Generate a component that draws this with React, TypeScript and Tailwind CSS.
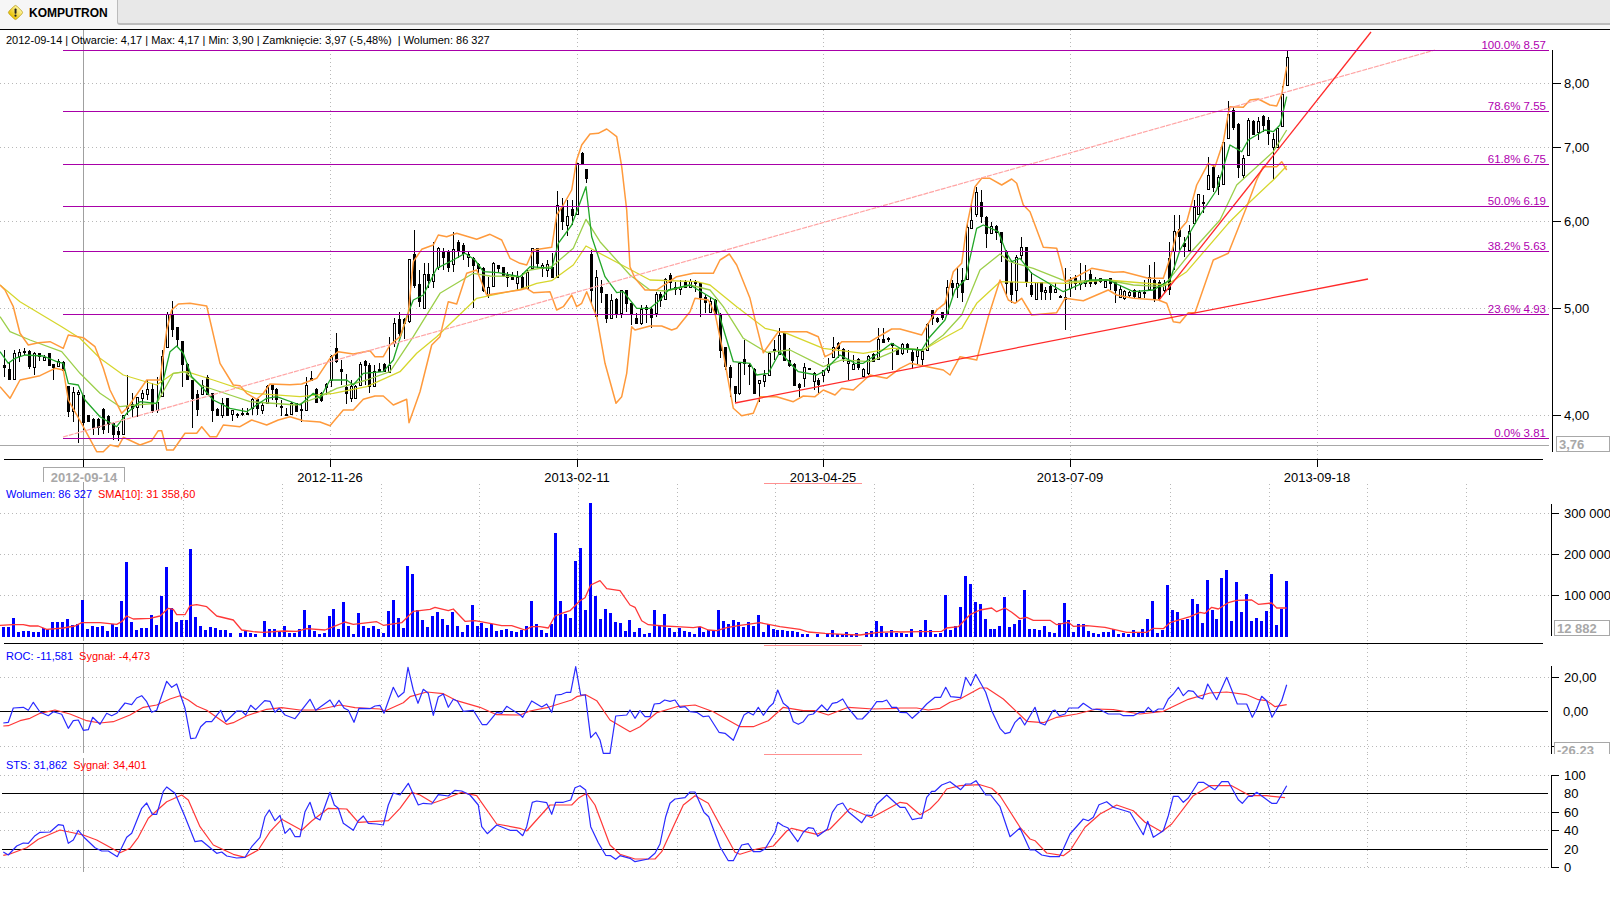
import React from "react";

const Z = (ox: number, oy: number, s: string): string =>
  s.split(" ").map((p) => {
    const [x, y] = p.split(",").map(Number);
    return `${(ox + x / 3).toFixed(1)},${(oy + y / 3).toFixed(1)}`;
  }).join(" ");

const upper = [
  Z(0, 230, "0,165 15,180 40,230 60,310 85,345 115,338 150,335 190,355 205,315 250,323 285,350 310,415 330,480 365,550 385,530 440,450 480,450 500,300 515,240 535,222 570,220 620,228 660,400 700,465 720,467 740,490 770,508 790,490 810,462 870,464 905,462 950,445 990,385 1015,365 1060,372 1110,362 1125,380 1150,380 1170,345 1200,320 1225,250 1240,95 1265,58 1300,45 1315,15 1340,20 1370,10 1430,28 1470,13 1505,30 1530,85 1560,100"),
  Z(520, 110, "20,465 40,420 95,412 110,315 130,285 155,240 170,150 185,105 210,72 235,70 260,57 290,80 305,170 320,300 330,470 345,505 375,540 410,540 470,500 520,490 580,490 600,450 628,432 650,465 690,565 710,650 730,728 775,665 860,665 895,680 915,740 935,730 965,695 1050,695 1115,657"),
  Z(900, 90, "0,717 30,725 65,735 85,700 110,660 135,640 160,545 185,520 200,410 225,290 245,265 270,265 305,285 335,267 350,280 370,345 390,365 430,472 470,475 485,530 495,575 530,560 575,535 640,547 670,545 745,565 790,565 810,505 830,430 860,395 890,285 925,220 945,230 970,155 985,70"),
  Z(1200, 0, "90,320 130,322 150,300 175,297 210,315 230,318 245,283 260,200"),
].join(" ");

const lower = [
  Z(0, 230, "0,470 30,505 60,450 120,437 165,415 190,420 205,510 250,590 290,665 310,665 330,645 355,650 370,622 420,645 455,632 475,602 485,602 500,660 520,660 555,610 590,610 605,590 630,620 650,620 670,585 720,590 755,570 800,585 835,570 870,560 910,572 960,576 990,587 1030,540 1060,540 1090,508 1125,498 1150,498 1180,525 1220,508 1227,578 1260,485 1295,345 1320,320 1345,215 1370,222 1400,130 1430,120 1460,195 1560,180"),
  Z(520, 110, "20,535 40,548 90,545 110,600 130,590 155,555 170,590 185,580 200,545 230,620 255,760 288,880 305,860 320,790 335,650 345,660 390,648 425,648 455,660 470,655 510,605 525,565 565,570 585,610 610,730 640,895 665,917 700,910 720,860 770,860 820,875 850,858 885,860 910,840 945,855 965,835 1000,840 1050,795 1100,805"),
  Z(900, 90, "0,835 30,820 130,840 150,855 180,800 230,810 265,680 300,570 325,630 345,640 365,625 395,675 470,668 495,625 550,632 625,600 650,615 700,625 775,630 800,640 820,695 840,698 865,668 885,668 940,510 985,490 1040,350 1070,270 1090,230 1130,230 1145,215 1160,240"),
].join(" ");

const green = [
  Z(0, 230, "0,365 25,400 45,385 75,375 130,378 170,395 190,400 205,460 235,465 255,510 300,560 350,590 380,550 420,515 470,520 490,450 510,365 530,348 550,370 575,440 600,465 640,510 690,535 740,545 800,505 830,500 900,525 940,490 960,505 990,450 1040,450 1060,465 1090,430 1150,425 1180,390 1220,260 1240,210 1270,195 1310,115 1360,90 1395,70 1425,90 1450,125 1495,128 1560,140"),
  Z(520, 110, "30,470 95,475 115,400 155,345 198,230 215,380 255,500 290,548 310,545 350,595 390,595 420,570 445,540 510,525 585,570 605,640 640,755 690,760 710,795 745,790 780,725 815,765 835,785 890,795 910,785 960,735 1005,760 1030,760 1075,730 1115,700"),
  Z(900, 90, "0,775 65,780 90,740 135,690 165,600 195,570 230,415 250,405 295,425 320,490 335,515 360,505 395,550 490,605 570,570 625,570 700,605 760,600 810,570 840,480 900,375 950,300 990,165 1025,185 1045,150 1095,120 1120,125 1140,105 1160,20"),
].join(" ");

const lightGreen = [
  Z(0, 230, "0,260 30,305 90,330 185,365 240,430 300,490 360,530 405,525 470,520 520,430 555,425 600,465 690,495 750,515 890,525 960,500 1010,475 1100,450 1170,425 1240,320 1320,190 1420,130 1470,138 1560,140"),
  Z(520, 110, "30,480 95,470 160,415 198,328 240,395 330,495 390,540 440,543 510,525 570,540 610,590 670,685 740,727 810,720 910,770 965,750 1050,755 1120,725"),
  Z(900, 90, "0,775 70,780 130,735 185,675 240,540 300,492 330,515 400,535 500,575 620,570 700,585 790,590 870,490 960,390 1010,285 1120,185 1160,120"),
].join(" ");

const yellow = [
  Z(0, 230, "0,165 60,215 185,290 240,325 300,385 370,435 470,465 520,430 560,425 640,450 760,490 900,500 1000,490 1100,470 1200,425 1250,370 1310,320 1430,205 1560,178"),
  Z(520, 110, "50,520 95,512 160,465 198,408 300,462 390,510 530,515 570,525 650,590 735,655 800,670 910,715 1030,730 1115,715"),
  Z(900, 90, "0,775 70,780 130,745 185,715 230,640 300,575 500,580 620,570 800,585 860,545 985,400 1040,345 1120,270 1160,228"),
].join(" ");

type C = { x: number; a: number; b: number; c: number; d: number; f: boolean };
const parseC = (ox: number, oy: number, s: string): C[] =>
  s.trim().split(/\s+/).map((p) => {
    const [x, a, b, c, d, f] = p.split(",").map(Number);
    return { x: ox + x / 3, a: oy + a / 3, b: oy + b / 3, c: oy + c / 3, d: oy + d / 3, f: f === 1 };
  });

const candles: C[] = [
  ...parseC(0, 230, `12,360,405,412,440,1 28,400,418,447,450,1 42,360,370,447,450,0 58,358,365,378,395,0 73,355,363,367,375,1 88,360,362,408,418,1 103,365,370,412,435,0 118,368,370,378,392,1 132,375,380,389,392,0 146,368,370,405,405,1 160,402,403,410,450,1 175,388,392,407,410,0 190,392,395,420,420,1 205,468,468,542,560,1 220,470,487,542,575,0 235,480,487,492,638,0 250,495,495,575,600,1 265,555,555,572,575,1 280,565,568,592,615,1 295,565,568,592,615,1 310,535,537,597,612,1 325,555,558,582,610,1 340,575,580,612,630,1 355,590,603,612,632,1 368,555,556,612,612,0 382,435,528,533,555,0 397,490,522,533,560,1 412,500,502,530,560,0 427,480,490,505,535,0 442,450,478,492,510,0 457,460,477,540,550,1 472,440,515,540,550,0 487,360,378,497,500,0 502,245,253,352,352,0 517,213,253,296,322,1 532,290,292,327,350,1 547,333,333,402,472,1 562,400,402,447,450,1 577,450,450,505,593,1 592,480,492,538,558,1 605,450,466,492,495,0 620,436,440,492,492,1 635,490,490,540,575,1 650,535,538,555,558,1 665,505,518,555,565,0 680,505,505,555,555,1 695,540,541,553,572,0 710,550,552,556,565,1 725,535,548,553,558,1 740,535,548,553,555,1 755,505,507,535,555,0 770,505,507,535,555,1 785,520,525,540,552,0 800,465,468,520,520,0 815,463,465,478,510,1 827,475,476,507,530,1 842,510,528,530,558,1 857,535,552,555,558,1 872,515,518,552,555,0 887,518,520,542,545,1 902,520,538,541,575,1 917,440,465,540,540,0 932,423,445,451,452,1 947,475,477,517,520,1 962,485,490,510,515,1 977,460,461,472,495,0 992,375,378,450,470,0 1007,310,355,392,400,1 1022,390,418,424,465,1 1037,432,470,490,522,1 1052,450,467,504,515,0 1064,465,468,503,505,0 1079,395,403,465,465,0 1094,390,392,405,465,1 1108,400,405,468,490,1 1123,405,422,468,468,0 1138,400,418,424,425,1 1153,400,402,422,425,1 1168,320,405,425,425,0 1183,265,278,340,350,0 1198,245,268,310,320,1 1213,265,268,280,328,1 1228,88,88,272,280,0 1243,0,72,165,175,1 1258,120,162,212,230,1 1273,100,133,233,232,0 1285,100,133,150,175,1 1300,35,133,152,175,0 1315,50,55,112,120,0 1330,55,63,80,120,1 1345,60,62,112,125,1 1360,5,58,102,125,0 1375,30,35,60,85,1 1390,40,45,70,90,1 1405,65,72,80,110,0 1420,80,85,105,235,1 1435,100,102,115,130,1 1450,110,115,180,185,1 1465,140,172,195,205,0 1480,95,98,168,168,0 1495,105,105,113,130,1 1510,110,112,135,140,1 1522,125,135,142,170,0 1537,125,135,148,150,1 1552,122,140,160,180,0`),
  ...parseC(520, 110, `7,490,500,533,535,1 22,480,485,533,535,0 37,415,415,473,475,0 52,415,415,460,475,1 67,458,465,475,500,0 82,450,462,480,500,0 97,430,470,500,500,1 112,243,285,500,500,0 127,265,292,332,360,1 142,270,318,345,378,0 157,270,298,315,345,1 172,160,160,313,315,0 187,125,130,160,165,1 199,178,178,205,218,1 214,420,433,540,580,1 229,480,502,618,618,0 244,510,530,545,578,1 259,552,553,625,638,1 274,552,570,625,625,0 289,565,568,612,625,1 304,540,541,610,625,0 319,540,541,578,605,1 334,578,578,612,645,1 349,610,625,638,640,1 364,585,598,638,645,0 379,585,592,598,640,0 394,590,598,620,655,1 409,545,553,610,620,0 421,545,552,570,590,1 436,505,508,568,570,0 451,490,495,515,540,1 466,515,530,538,555,0 481,510,530,538,555,0 496,510,516,530,535,1 511,508,512,530,535,0 526,510,514,520,545,1 541,518,520,560,620,1 556,555,560,575,610,1 571,560,572,605,605,0 586,568,570,612,612,1 601,610,612,720,745,1 616,710,712,767,780,1 631,765,770,800,860,1 646,828,828,850,875,1 658,755,758,848,855,0 673,690,748,760,795,1 688,760,765,768,825,1 703,775,778,850,850,1 718,810,811,820,875,0 733,780,795,812,830,0 748,725,730,795,795,0 763,690,718,722,750,1 778,655,676,733,735,0 793,670,670,750,750,1 808,715,750,765,770,1 823,760,762,825,825,1 838,820,822,832,860,1 853,760,772,805,830,0 868,775,775,777,780,1 881,785,790,812,840,0 895,805,810,822,848,1 910,780,781,795,815,0 925,745,762,780,790,0 940,680,710,742,745,0 955,695,700,715,745,1 970,715,716,745,755,1 985,720,752,760,810,0 1000,735,762,778,780,0 1015,745,747,772,780,1 1030,775,778,798,800,0 1045,735,738,790,795,0 1060,730,732,752,755,1 1075,655,688,748,750,0 1090,655,687,695,700,1 1105,680,685,688,695,1 1117,700,700,705,780,1 1132,715,715,733,735,1 1147,700,701,730,735,0 1162,700,702,715,730,1 1177,720,727,750,778,1 1192,710,720,737,765,0`),
  ...parseC(900, 90, `67,780,782,808,825,0 82,700,702,780,780,0 97,660,660,685,705,1 112,680,685,693,700,1 127,665,666,680,690,1 142,570,590,670,670,0 157,570,578,590,625,1 172,530,580,590,625,0 187,535,570,605,635,1 202,400,410,568,570,0 214,345,390,413,415,0 229,290,305,372,380,0 244,300,335,377,400,1 259,378,380,430,475,1 274,395,407,428,430,0 289,405,407,425,450,1 304,425,425,455,515,1 319,480,482,578,620,1 334,520,575,612,640,1 349,495,500,600,635,0 364,440,472,495,510,0 379,470,472,572,590,1 394,545,585,612,620,1 409,575,577,628,630,0 424,575,577,602,630,1 436,590,600,606,630,0 451,585,588,605,630,1 466,580,597,606,610,0 481,615,617,618,620,1 496,535,622,628,720,0 511,560,570,595,622,0 526,555,565,580,600,1 541,520,575,582,600,0 556,525,570,580,590,0 571,540,552,578,590,1 586,560,572,580,585,1 601,565,563,572,580,0 616,570,572,590,595,0 631,565,565,580,600,1 646,570,577,600,640,1 661,585,598,620,625,0 673,600,602,625,630,0 688,602,606,615,625,0 703,598,600,618,625,1 718,600,605,622,625,0 733,570,606,610,625,1 748,525,562,598,600,0 763,517,570,628,635,1 778,570,575,625,630,1 793,570,580,600,610,0 808,455,505,598,615,1 823,375,423,482,540,0 838,375,418,438,480,1 853,440,460,467,500,1 868,405,424,480,480,0 883,330,350,400,400,0 895,312,313,372,375,0 910,315,335,340,370,1 925,200,255,298,300,0 940,225,230,290,305,1 955,255,260,288,315,0 970,150,155,283,285,0 985,32,72,143,145,0 1000,50,60,110,120,1 1015,100,103,230,265,1 1030,195,205,255,265,0 1045,85,90,195,195,0 1060,90,92,132,135,1 1075,80,92,125,150,0 1090,75,77,105,125,1 1105,80,90,130,165,1 1120,130,148,170,270,0 1132,110,113,170,170,0`),
  ...parseC(1200, 0, `247,258,282,378,380,0 262,152,170,255,258,0`),
];

const volume = [
  ...`10,470 25,470 40,444 55,485 70,483 85,483 100,485 115,485 130,473 143,476 158,456 173,456 187,456 202,447 217,465 232,462 246,390 262,477 278,468 292,470 307,468 322,483 337,462 350,470 365,393 380,276 395,456 410,480 424,474 439,474 454,435 469,465 484,378 499,291 514,414 529,456 544,450 559,450 572,237 587,441 602,468 617,480 632,471 647,474 662,480 676,480 691,489 721,489 736,483 751,489 766,492 793,453 808,477 823,477 838,486 853,468 868,489 883,489 898,477 913,420 928,465 943,483 958,492 973,489 988,438 1001,417 1016,477 1031,396 1046,468 1061,492 1076,429 1091,468 1106,474 1121,468 1136,477 1151,489 1166,423 1180,390 1195,444 1210,474 1222,288 1237,312 1252,420 1267,450 1282,471 1297,438 1312,426 1327,447 1342,465 1357,426 1372,468 1387,486 1402,465 1417,405 1432,468 1444,459 1459,474 1474,462 1489,483 1504,480 1519,477 1534,483 1549,486`.split(" ").map((p) => { const [x, y] = p.split(",").map(Number); return { x: x / 3, y: 470 + y / 3 }; }),
  ...`5,480 19,468 34,393 49,462 64,480 79,489 94,462 107,189 122,393 137,432 152,444 166,273 181,234 196,420 212,99 226,378 241,447 256,417 271,429 286,456 301,459 316,483 329,450 344,486 359,474 374,492 389,489 404,420 419,465 434,432 449,474 464,486 478,474 493,483 508,486 523,492 538,471 551,486 566,480 581,483 596,420 611,453 626,462 641,450 656,456 671,471 686,456 701,468 716,435 731,486 746,462 761,477 772,480 787,480 802,483 817,483 832,486 847,492 862,492 892,492 922,492 937,480 952,492 967,492 980,486 995,492 1010,489 1040,486 1055,483 1070,453 1085,468 1100,489 1115,480 1130,489`.split(" ").map((p) => { const [x, y] = p.split(",").map(Number); return { x: 520 + x / 3, y: 470 + y / 3 }; }),
  ...`4,447 19,450 34,435 61,438 76,408 91,438 106,450 121,447 136,333 151,438 166,426 181,369 196,276 211,300 226,354 241,360 256,405 271,435 283,435 298,426 313,339 328,429 343,420 358,408 373,318 388,435 403,435 418,438 433,426 448,444 463,447 478,417 493,357 505,408 520,444 535,420 550,420 565,441 580,447 595,450 610,444 625,444 640,435 655,450 670,447 685,450 700,438 715,447 727,435 742,405 757,351 772,447 787,438 802,303 817,378 832,384 847,408 862,405 877,345 892,360 907,417 922,288 937,378 949,405 964,282 979,258 994,411 1009,294 1024,384 1039,330 1054,411 1069,402 1084,411 1099,381 1114,270 1129,423 1144,375 1159,291`.split(" ").map((p) => { const [x, y] = p.split(",").map(Number); return { x: 900 + x / 3, y: 484 + y / 3 }; }),
];

const sma = [
  Z(0, 470, "0,466 40,464 70,464 90,468 115,468 140,478 190,474 225,468 245,458 300,458 350,463 365,455 380,438 400,447 450,445 480,438 505,415 520,418 530,434 555,434 570,407 590,404 620,410 650,438 700,450 725,480 760,485 790,487 850,483 890,484 920,476 975,480 1010,466 1035,456 1060,463 1130,455 1150,466 1205,458 1240,424 1290,418 1305,412 1345,422 1360,417 1395,454 1425,452 1470,460 1505,467 1535,467 1560,475"),
  Z(520, 470, "15,480 35,470 60,470 85,474 105,438 125,430 150,422 180,392 195,383 212,345 240,332 260,356 300,362 330,405 345,412 365,452 385,464 430,468 470,470 520,473 540,470 565,480 590,482 620,473 660,466 720,458 780,470 840,478 865,486 915,490 970,493 1020,495 1075,487 1130,485"),
  Z(900, 484, "0,444 60,443 125,442 140,432 175,428 210,392 240,378 275,372 290,383 315,372 335,385 360,404 380,400 400,409 450,409 470,422 505,415 520,427 560,425 615,430 680,445 740,445 760,433 790,434 810,416 870,398 900,385 915,388 935,370 955,375 985,356 1010,349 1055,348 1075,361 1115,357 1130,372 1160,372"),
].join(" ");

const rocBlue = [
  Z(0, 630, "10,279 25,277 40,234 70,232 85,241 100,217 120,246 145,257 160,245 185,253 205,295 220,272 235,270 250,301 265,299 278,262 300,283 320,250 335,257 350,250 375,219 395,224 410,204 425,197 440,215 455,247 470,241 500,154 515,172 530,162 555,235 572,326 587,324 602,290 618,275 635,275 662,241 677,275 710,243 725,243 737,255 752,226 767,239 794,212 810,214 825,247 838,235 855,255 885,266 930,208 947,241 990,210 1003,231 1017,211 1033,235 1045,241 1062,277 1077,235 1110,236 1125,228 1140,226 1152,250 1180,172 1195,201 1212,187 1224,112 1240,180 1254,220 1270,178 1285,190 1300,256 1315,201 1330,192 1345,232 1360,208 1372,213 1390,244 1420,241 1447,284 1460,284 1490,247 1505,250 1520,229 1560,254"),
  Z(520, 470, "8,742 35,693 65,711 80,702 95,727 107,675 125,673 140,667 152,667 167,590 182,675 196,675 212,803 227,787 240,810 250,850 270,850 287,738 320,735 330,720 345,745 360,722 375,740 390,740 403,702 420,700 434,690 450,694 465,690 480,712 495,710 510,725 530,727 550,740 566,738 597,787 615,790 640,811 672,735 685,727 700,735 715,712 730,736 747,712 760,700 773,660 790,700 805,712 820,755 835,763 850,755 865,735 880,732 905,705 922,722 937,700 952,697 968,687 983,712 1012,747 1027,747 1050,723 1070,695 1087,695 1100,690 1115,712 1130,712"),
  Z(900, 484, "0,685 20,686 37,703 60,682 80,660 105,640 122,640 137,610 152,638 182,641 197,580 212,605 227,571 257,625 275,680 300,733 315,749 330,745 345,715 360,700 374,723 405,670 420,717 435,723 458,680 465,678 478,695 495,690 507,672 535,672 550,658 575,675 600,677 625,690 660,690 670,695 700,695 720,685 733,685 745,670 760,685 775,675 790,675 805,645 820,630 835,610 850,635 865,620 880,622 895,640 908,645 923,600 950,647 980,580 1012,660 1040,660 1057,700 1070,675 1085,637 1100,650 1116,700 1145,650 1160,602"),
].join(" ");

const rocRed = [
  Z(0, 630, "10,288 25,287 60,272 90,265 120,250 165,240 210,252 260,272 300,279 340,275 390,255 430,232 470,225 510,207 540,197 565,210 590,228 620,241 680,283 700,278 740,257 800,238 845,233 900,240 950,240 1020,225 1065,233 1140,237 1155,243 1210,218 1230,200 1280,186 1330,191 1370,212 1440,232 1490,254 1560,255"),
  Z(520, 470, "30,723 80,713 155,690 170,680 197,674 230,692 270,750 330,785 360,770 410,728 470,710 525,705 580,725 660,770 700,770 745,752 790,712 850,722 885,722 925,735 985,712 1060,717 1130,715"),
  Z(900, 484, "0,672 50,672 85,678 120,673 150,655 180,645 240,612 260,612 310,645 380,712 430,716 470,700 530,690 590,675 640,677 720,690 790,682 865,646 930,627 980,624 1040,632 1075,647 1100,650 1125,668 1160,662"),
].join(" ");

const stsBlue = [
  Z(0, 630, "10,666 25,675 50,648 70,639 85,640 105,617 120,607 150,606 175,584 190,586 205,640 220,630 235,601 255,625 285,653 305,663 325,663 352,680 380,622 395,610 425,535 440,519 457,553 470,553 490,484 500,471 525,490 555,560 585,635 605,632 650,670 665,666 680,678 710,684 735,682 755,650 780,622 795,560 808,540 825,572 840,556 855,610 870,595 885,620 900,620 915,545 930,517 945,562 960,570 990,487 1003,525 1015,535 1030,580 1060,601 1075,572 1090,558 1105,580 1130,582 1150,585 1165,525 1180,489 1200,495 1225,460 1255,525 1270,520 1295,522 1315,494 1345,498 1365,481 1385,483 1410,495 1435,525 1445,590 1462,611 1490,585 1530,601 1550,601 1560,610"),
  Z(520, 745, "8,272 20,245 37,172 50,168 80,173 95,208 107,172 130,172 152,165 165,128 180,122 197,135 212,245 235,293 257,331 272,332 287,343 300,332 330,340 345,350 385,342 405,325 420,297 437,215 450,175 465,162 495,158 510,141 525,141 552,202 566,215 600,305 625,347 640,347 665,300 685,296 700,320 720,320 735,312 765,262 773,232 790,243 803,248 833,290 850,262 865,248 880,250 893,274 922,252 937,202 952,180 968,174 985,200 1025,233 1040,210 1055,212 1070,178 1100,150"),
  Z(900, 484, "0,970 15,970 37,1007 60,1002 65,1003 80,940 95,922 105,922 125,903 150,893 182,917 197,900 212,900 228,890 257,933 272,933 300,968 330,1058 360,1032 390,1098 405,1098 425,1113 450,1118 478,1118 490,1095 510,1050 550,1005 565,1010 580,1000 597,962 620,953 640,970 690,985 730,1052 743,1012 760,1060 790,1040 805,995 820,937 835,937 850,955 865,942 895,895 910,895 945,917 965,893 985,893 1015,947 1027,958 1045,937 1057,937 1070,925 1115,958 1130,958 1160,905"),
].join(" ");

const stsRed = [
  Z(0, 630, "10,676 30,672 80,653 115,628 180,600 250,615 290,630 360,668 390,655 415,622 445,565 500,515 545,495 565,510 600,590 640,645 700,673 735,682 775,660 810,605 845,568 905,601 935,573 985,535 1040,537 1075,577 1165,572 1200,535 1235,487 1260,495 1300,519 1340,505 1385,487 1430,497 1490,582 1560,595"),
  Z(520, 745, "20,258 90,180 155,180 175,160 200,145 225,180 270,300 300,328 345,342 405,342 425,320 490,180 525,152 565,175 600,240 645,322 660,328 710,312 760,303 800,258 815,250 890,268 930,252 990,190 1055,218"),
  Z(900, 484, "0,955 20,958 60,992 90,975 115,950 140,915 180,905 240,902 275,913 300,935 360,1030 390,1065 405,1070 440,1107 490,1115 510,1100 555,1030 600,990 650,963 700,980 735,1015 785,1043 815,1020 880,935 930,905 995,905 1050,935 1100,935 1155,941"),
].join(" ");

const FIB = [
  { y: 50, t: "100.0% 8.57", ly: 45 },
  { y: 111, t: "78.6% 7.55", ly: 106 },
  { y: 164, t: "61.8% 6.75", ly: 159 },
  { y: 206, t: "50.0% 6.19", ly: 201 },
  { y: 251, t: "38.2% 5.63", ly: 246 },
  { y: 314, t: "23.6% 4.93", ly: 309 },
  { y: 438, t: "0.0% 3.81", ly: 433 },
];
const PRICE_TICKS = [
  { y: 83, t: "8,00" },
  { y: 147, t: "7,00" },
  { y: 221, t: "6,00" },
  { y: 308, t: "5,00" },
  { y: 415, t: "4,00" },
];
const DATES = [
  { x: 330, t: "2012-11-26" },
  { x: 577, t: "2013-02-11" },
  { x: 823, t: "2013-04-25" },
  { x: 1070, t: "2013-07-09" },
  { x: 1317, t: "2013-09-18" },
];
const SUBGRID = Array.from({ length: 14 }, (_, i) => Math.round(183.3 + 98.67 * i));

const dot = "#b8b8b8";
const HDots = ({ ys }: { ys: number[] }) => (
  <>
    {ys.map((y) => (
      <line key={y} x1={0} x2={1551} y1={y + 0.5} y2={y + 0.5} stroke={dot} strokeDasharray="1 3" />
    ))}
  </>
);
const VDots = ({ xs, y1, y2 }: { xs: number[]; y1: number; y2: number }) => (
  <>
    {xs.map((x) => (
      <line key={x} x1={x + 0.5} x2={x + 0.5} y1={y1} y2={y2} stroke={dot} strokeDasharray="1 3" />
    ))}
  </>
);
const Line = ({ pts, color, w = 1.2 }: { pts: string; color: string; w?: number }) => (
  <polyline points={pts} fill="none" stroke={color} strokeWidth={w} strokeLinejoin="round" />
);
const H = ({ y, x1, x2, color = "#000" }: { y: number; x1: number; x2: number; color?: string }) => (
  <line x1={x1} x2={x2} y1={y + 0.5} y2={y + 0.5} stroke={color} shapeRendering="crispEdges" />
);
const V = ({ x, y1, y2, color = "#000" }: { x: number; y1: number; y2: number; color?: string }) => (
  <line x1={x + 0.5} x2={x + 0.5} y1={y1} y2={y2} stroke={color} shapeRendering="crispEdges" />
);
const AxisLabel = ({ x, y, t }: { x: number; y: number; t: string }) => (
  <text x={x} y={y + 4.5} fontSize={13} fill="#000">{t}</text>
);
const ValueBox = ({ x, y, h, t }: { x: number; y: number; h: number; t: string }) => (
  <g>
    <rect x={x + 0.5} y={y + 0.5} width={1609 - x} height={h} fill="#fff" stroke="#a8a8a8" shapeRendering="crispEdges" />
    <text x={x + 3} y={y + 13} fontSize={13} fontWeight={700} fill="#a8a8a8">{t}</text>
  </g>
);

function PricePanel() {
  return (
    <div className="relative h-[452px]">
      <div className="absolute left-[6px] top-[3px] text-[11px] leading-[14px] text-black whitespace-pre">
        {"2012-09-14 | Otwarcie: 4,17 | Max: 4,17 | Min: 3,90 | Zamknięcie: 3,97 (-5,48%)  | Wolumen: 86 327"}
      </div>
      <svg viewBox="0 30 1610 452" className="block w-[1610px] h-[452px]" style={{ fontFamily: "'Liberation Sans', Arial, sans-serif" }}>
        <HDots ys={PRICE_TICKS.map((t) => t.y)} />
        <VDots xs={DATES.map((d) => d.x)} y1={30} y2={459} />
        <V x={83} y1={30} y2={459} color="#a0a0a0" />
        <H y={445} x1={0} x2={1549} color="#a8a8a8" />
        <g shapeRendering="crispEdges">
          {candles.map((c, i) => {
            const r = Math.round(c.x) - 1;
            const t = Math.round(c.b);
            const h = Math.max(1, Math.round(c.c) - t);
            return (
              <g key={i}>
                <rect x={r + 1} y={c.a} width={1} height={Math.max(1, c.d - c.a)} fill="#000" />
                <rect x={r + 0.5} y={t + 0.5} width={2} height={h} fill={c.f ? "#000" : "#fff"} stroke="#000" />
              </g>
            );
          })}
        </g>
        <Line pts={yellow} color="#d6d62c" w={1.3} />
        <Line pts={lightGreen} color="#9ccf4a" w={1.3} />
        <Line pts={green} color="#22a628" w={1.3} />
        <Line pts={upper} color="#ff9a3c" w={1.5} />
        <Line pts={lower} color="#ff9a3c" w={1.5} />
        <line x1={63} y1={437} x2={1435} y2={50} stroke="#ffa4a4" strokeWidth={1.2} strokeDasharray="5 1" />
        <line x1={735} y1={403} x2={1368} y2={279} stroke="#ff2a2a" strokeWidth={1.3} />
        <line x1={1159} y1={300} x2={1371} y2={32} stroke="#ff2a2a" strokeWidth={1.3} />
        {FIB.map((f) => (
          <g key={f.y}>
            <H y={f.y} x1={63} x2={1549} color="#a800a8" />
            <text x={1546} y={f.ly + 4} textAnchor="end" fontSize={11.5} fill="#b000b0">{f.t}</text>
          </g>
        ))}
        <V x={1552} y1={50} y2={452} />
        {PRICE_TICKS.map((t) => (
          <g key={t.y}>
            <H y={t.y} x1={1552} x2={1561} />
            <AxisLabel x={1564} y={t.y} t={t.t} />
          </g>
        ))}
        <ValueBox x={1556} y={436} h={15} t="3,76" />
        <H y={459} x1={4} x2={1543} />
        <V x={83} y1={459} y2={467} />
        {DATES.map((d) => (
          <g key={d.x}>
            <V x={d.x} y1={459} y2={467} />
            <text x={d.x} y={481.5} textAnchor="middle" fontSize={13} fill="#000">{d.t}</text>
          </g>
        ))}
        <rect x={43.5} y={467.5} width={81} height={20} fill="#fff" stroke="#a8a8a8" shapeRendering="crispEdges" />
        <text x={84} y={482} textAnchor="middle" fontSize={13} fontWeight={700} fill="#a8a8a8">2012-09-14</text>
      </svg>
    </div>
  );
}

function VolumePanel() {
  return (
    <div className="relative h-[162px]">
      <svg viewBox="0 482 1610 162" className="block w-[1610px] h-[162px]" style={{ fontFamily: "'Liberation Sans', Arial, sans-serif" }}>
        <HDots ys={[513, 554, 595]} />
        <VDots xs={SUBGRID} y1={484} y2={644} />
        <H y={483} x1={764} x2={862} color="#ff9090" />
        <V x={83} y1={482} y2={641} color="#a0a0a0" />
        <g shapeRendering="crispEdges">
          {volume.map((b, i) => (
            <rect key={i} x={Math.round(b.x - 1.5)} y={b.y} width={3} height={637 - b.y} fill="#0000ff" />
          ))}
        </g>
        <Line pts={sma} color="#ff3838" w={1.3} />
        <H y={643} x1={4} x2={1543} />
        <V x={1551} y1={504} y2={636} />
        {[{ y: 513, t: "300 000" }, { y: 554, t: "200 000" }, { y: 595, t: "100 000" }].map((t) => (
          <g key={t.y}>
            <H y={t.y} x1={1551} x2={1559} />
            <AxisLabel x={1564} y={t.y} t={t.t} />
          </g>
        ))}
        <ValueBox x={1554} y={620} h={15} t="12 882" />
      </svg>
      <div className="absolute left-[6px] top-[5px] flex gap-[6px] text-[11px] leading-[14px]">
        <span className="text-[#0000ff]">Wolumen: 86 327</span>
        <span className="text-[#ff0000]">SMA[10]: 31 358,60</span>
      </div>
    </div>
  );
}

function RocPanel() {
  return (
    <div className="relative h-[110px]">
      <svg viewBox="0 644 1610 110" className="block w-[1610px] h-[110px]" style={{ fontFamily: "'Liberation Sans', Arial, sans-serif" }}>
        <HDots ys={[677, 746]} />
        <VDots xs={SUBGRID} y1={644} y2={754} />
        <H y={645} x1={764} x2={862} color="#ff9090" />
        <V x={83} y1={644} y2={753} color="#a0a0a0" />
        <H y={711} x1={0} x2={1548} />
        <Line pts={rocRed} color="#ff3838" />
        <Line pts={rocBlue} color="#2a2aff" />
        <V x={1551} y1={666} y2={754} />
        <H y={677} x1={1551} x2={1559} />
        <H y={746} x1={1551} x2={1554} />
        <AxisLabel x={1564} y={677} t="20,00" />
        <AxisLabel x={1563} y={711} t="0,00" />
        <ValueBox x={1554} y={742} h={15} t="-26,23" />
      </svg>
      <div className="absolute left-[6px] top-[5px] flex gap-[6px] text-[11px] leading-[14px]">
        <span className="text-[#0000ff]">ROC: -11,581</span>
        <span className="text-[#ff0000]">Sygnał: -4,473</span>
      </div>
    </div>
  );
}

function StsPanel() {
  return (
    <div className="relative h-[121px]">
      <svg viewBox="0 754 1610 121" className="block w-[1610px] h-[121px]" style={{ fontFamily: "'Liberation Sans', Arial, sans-serif" }}>
        <HDots ys={[775, 812, 830, 867]} />
        <VDots xs={SUBGRID} y1={754} y2={870} />
        <H y={754} x1={764} x2={862} color="#ff9090" />
        <V x={83} y1={758} y2={872} color="#a0a0a0" />
        <H y={793} x1={2} x2={1548} />
        <H y={849} x1={2} x2={1548} />
        <Line pts={stsRed} color="#ff3838" />
        <Line pts={stsBlue} color="#2a2aff" />
        <V x={1551} y1={775} y2={868} />
        {[775, 812, 830, 867].map((y) => (
          <H key={y} y={y} x1={1551} x2={1559} />
        ))}
        {[{ y: 775, t: "100" }, { y: 793, t: "80" }, { y: 812, t: "60" }, { y: 830, t: "40" }, { y: 849, t: "20" }, { y: 867, t: "0" }].map((t) => (
          <AxisLabel key={t.y} x={1564} y={t.y} t={t.t} />
        ))}
      </svg>
      <div className="absolute left-[6px] top-[4px] flex gap-[6px] text-[11px] leading-[14px]">
        <span className="text-[#0000ff]">STS: 31,862</span>
        <span className="text-[#ff0000]">Sygnał: 34,401</span>
      </div>
    </div>
  );
}

function WarnIcon() {
  return (
    <svg width="17" height="17" viewBox="0 0 17 17">
      <defs>
        <linearGradient id="warnG" x1="0" y1="0" x2="0" y2="1">
          <stop offset="0" stopColor="#fff6a0" />
          <stop offset="1" stopColor="#e8c000" />
        </linearGradient>
      </defs>
      <rect x="3" y="3" width="11" height="11" rx="2" transform="rotate(45 8.5 8.5)" fill="url(#warnG)" stroke="#b89a10" strokeWidth="0.7" />
      <rect x="7.6" y="4.5" width="1.9" height="5.3" rx="0.7" fill="#222" />
      <circle cx="8.5" cy="11.7" r="1.1" fill="#222" />
    </svg>
  );
}

export default function App() {
  return (
    <div className="w-[1610px] h-[900px] overflow-hidden bg-white font-['Liberation_Sans',Arial,sans-serif]">
      <div className="flex h-[30px] bg-[#f6f6f6] border-b border-black">
        <div className="flex items-center gap-[5px] w-[117px] h-[24px] pl-[7px] pt-[1px]">
          <WarnIcon />
          <span className="text-[12px] font-bold text-black">KOMPUTRON</span>
        </div>
        <div className="flex-1 h-[25px] bg-[#e8e8e8] border-l border-b-2 border-[#bcbcbc] rounded-bl-[3px]" />
      </div>
      <PricePanel />
      <VolumePanel />
      <RocPanel />
      <StsPanel />
    </div>
  );
}
